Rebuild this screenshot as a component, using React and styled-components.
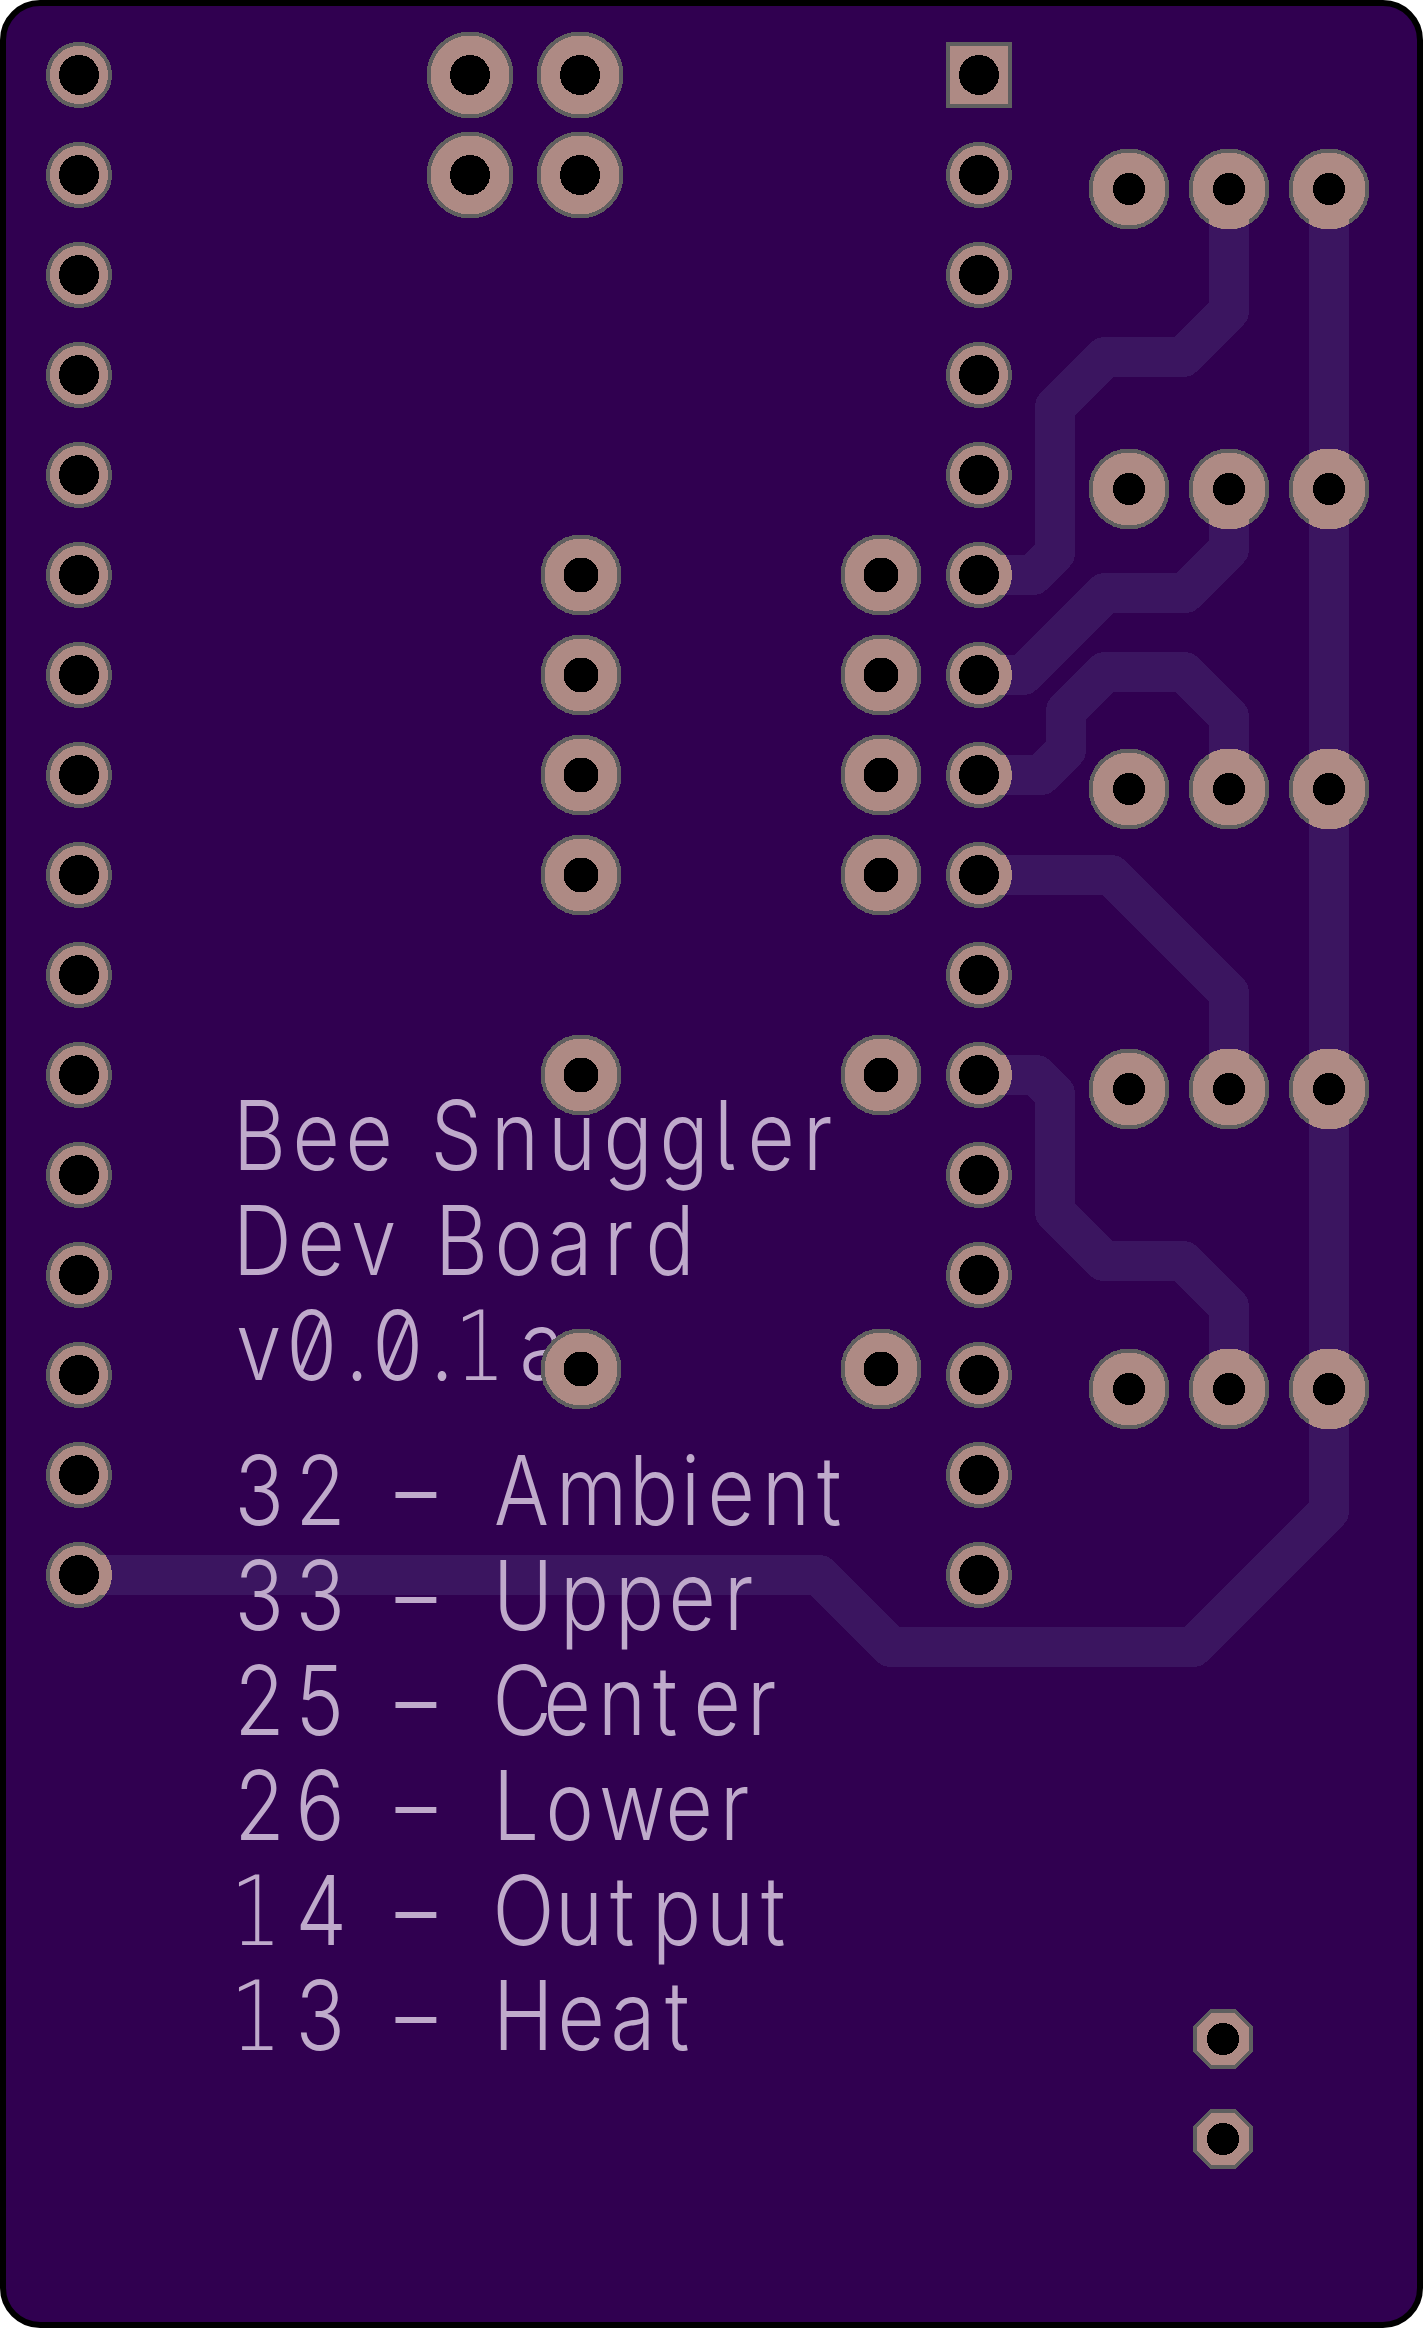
import styled, { createGlobalStyle } from 'styled-components';

const GlobalStyle = createGlobalStyle`
  html, body {
    margin: 0;
    padding: 0;
    background: #fff;
  }
`;

const Board = styled.div`
  width: 1423px;
  height: 2328px;
  box-sizing: border-box;
  border: 6px solid #000;
  border-radius: 40px;
  background: #300050;
  overflow: hidden;
`;

const Canvas = styled.svg`
  display: block;
  width: 1411px;
  height: 2316px;
`;

const Trace = styled.path`
  fill: none;
  stroke: #3b1560;
  stroke-width: 40;
  stroke-linejoin: round;
  shape-rendering: crispEdges;
`;

const Silk = styled.text`
  font-family: Inter, "Liberation Sans", sans-serif;
  font-size: 96px;
  font-weight: 300;
  font-feature-settings: "zero", "cv05";
  fill: #bfaacb;
`;

const FootedOne = styled.tspan`
  font-family: "DejaVu Sans", "Liberation Sans", sans-serif;
  font-weight: 200;
`;

const Land = styled.circle`
  fill: #ae8a84;
  stroke: #5f5f5f;
  stroke-width: 4;
  shape-rendering: crispEdges;
`;

const SquareLand = styled.rect`
  fill: #ae8a84;
  stroke: #5f5f5f;
  stroke-width: 4;
  shape-rendering: crispEdges;
`;

const OctLand = styled.polygon`
  fill: #ae8a84;
  stroke: #5f5f5f;
  stroke-width: 4;
  shape-rendering: crispEdges;
`;

const Stub = styled.path`
  fill: #ae8a84;
  shape-rendering: crispEdges;
`;

const Hole = styled.circle`
  fill: #000;
  shape-rendering: crispEdges;
`;

const TRACES = [
  'M1229 189 L1229 311 L1183 357 L1105 357 L1055 407 L1055 553 L1033 575 L979 575',
  'M1229 489 L1229 549 L1185 593 L1105 593 L1023 675 L979 675',
  'M979 775 L1041 775 L1066 750 L1066 711 L1105 672 L1184 672 L1229 717 L1229 789',
  'M979 875 L1111 875 L1229 993 L1229 1089',
  'M979 1075 L1036 1075 L1055 1094 L1055 1212 L1104 1261 L1183 1261 L1229 1307 L1229 1389',
  'M1329 189 L1329 1511 L1193 1647 L891 1647 L819 1575 L79 1575',
];

const DOWN = 0;
const RIGHT = -90;
const UP = 180;

const range = (start, step, count) => Array.from({ length: count }, (_, i) => start + step * i);

const PADS = [
  ...range(75, 100, 16).map((y) => ({ x: 79, y, r: 33, hole: 20, exits: y === 1575 ? [RIGHT] : [] })),
  ...range(175, 100, 15).map((y) => ({
    x: 979,
    y,
    r: 33,
    hole: 20,
    exits: [575, 675, 775, 875, 1075].includes(y) ? [RIGHT] : [],
  })),
  ...[470, 580].flatMap((x) => [75, 175].map((y) => ({ x, y, r: 43.5, hole: 20, exits: [] }))),
  ...[581, 881].flatMap((x) =>
    [575, 675, 775, 875, 1075, 1369].map((y) => ({ x, y, r: 40.5, hole: 17.5, exits: [] })),
  ),
  ...[189, 489, 789, 1089, 1389].map((y) => ({ x: 1129, y, r: 40.5, hole: 16, exits: [] })),
  { x: 1229, y: 189, r: 40.5, hole: 16, exits: [DOWN] },
  { x: 1229, y: 489, r: 40.5, hole: 16, exits: [DOWN] },
  { x: 1229, y: 789, r: 40.5, hole: 16, exits: [UP] },
  { x: 1229, y: 1089, r: 40.5, hole: 16, exits: [UP] },
  { x: 1229, y: 1389, r: 40.5, hole: 16, exits: [UP] },
  { x: 1329, y: 189, r: 40.5, hole: 16, exits: [DOWN] },
  ...[489, 789, 1089, 1389].map((y) => ({ x: 1329, y, r: 40.5, hole: 16, exits: [UP, DOWN] })),
];

// ink-left of each glyph, read off the board; spaces get a dummy slot
const LINES = [
  { text: 'Bee Snuggler', y: 1170, ink: [239, 297, 350, 400, 435, 497, 554, 608, 664, 720, 752, 809] },
  { text: 'Dev Board', y: 1275, ink: [239, 302, 354, 400, 441, 499, 552, 610, 650] },
  { text: 'v0.0.1a', y: 1380, ink: [239, 291, 350, 377, 435, 463, 524] },
  { text: '32 – Ambient', y: 1525, ink: [239, 300, 370, 400, 470, 495, 562, 635, 687, 712, 768, 818] },
  { text: '33 – Upper', y: 1630, ink: [239, 300, 370, 400, 470, 499, 566, 621, 673, 730] },
  { text: '25 – Center', y: 1735, ink: [239, 300, 370, 400, 470, 497, 548, 604, 654, 698, 753] },
  { text: '26 – Lower', y: 1840, ink: [239, 300, 370, 400, 470, 499, 550, 602, 670, 726] },
  { text: '14 – Output', y: 1945, ink: [239, 300, 370, 400, 470, 497, 561, 611, 658, 712, 762] },
  { text: '13 – Heat', y: 2050, ink: [239, 300, 370, 400, 470, 499, 562, 615, 666] },
];

const SQUEEZE = 0.85;
const stems = 'BDHLUbhiklmnpru';
const bearing = (ch) => {
  if (stems.includes(ch)) return 6;
  if (ch === '1') return 9;
  if (ch === 'v' || ch === 'w') return 3;
  if (ch === 'A' || ch === 't') return 1;
  return 4.5;
};

const glyphX = (text, ink) =>
  [...text].map((ch, i) => ((ink[i] - bearing(ch)) / SQUEEZE).toFixed(1)).join(' ');

// the footed "1" comes from another family, everything else stays in one run
const silkRuns = (text) =>
  text.split(/(1)/).filter(Boolean).map((run, i) =>
    run === '1' ? <FootedOne key={i}>1</FootedOne> : <tspan key={i}>{run}</tspan>,
  );

const stubPath = (r) => {
  const dy = Math.sqrt(r * r - 400).toFixed(1);
  return `M-20 0 L-20 ${dy} A${r} ${r} 0 0 0 20 ${dy} L20 0 Z`;
};

const Pad = ({ x, y, r, hole, exits }) => (
  <g>
    <Land cx={x} cy={y} r={r - 2} />
    {exits.map((angle) => (
      <Stub key={angle} d={stubPath(r)} transform={`translate(${x} ${y}) rotate(${angle})`} />
    ))}
    <Hole cx={x} cy={y} r={hole} />
  </g>
);

const octagon = (cx, cy) => {
  const a = 28;
  const b = 12;
  return [
    [-b, -a], [b, -a], [a, -b], [a, b], [b, a], [-b, a], [-a, b], [-a, -b],
  ].map(([dx, dy]) => `${cx + dx},${cy + dy}`).join(' ');
};

const App = () => (
  <>
    <GlobalStyle />
    <Board>
      <Canvas viewBox="6 6 1411 2316">
        {TRACES.map((d) => (
          <Trace key={d} d={d} />
        ))}
        <g transform={`scale(${SQUEEZE} 1)`}>
          {LINES.map((line) => (
            <Silk key={line.text} y={line.y} x={glyphX(line.text, line.ink)}>
              {silkRuns(line.text)}
            </Silk>
          ))}
        </g>
        {PADS.map((pad) => (
          <Pad key={`${pad.x}-${pad.y}`} {...pad} />
        ))}
        <SquareLand x={948} y={44} width={62} height={62} />
        <Hole cx={979} cy={75} r={20} />
        {[2039, 2139].map((y) => (
          <g key={y}>
            <OctLand points={octagon(1223, y)} />
            <Hole cx={1223} cy={y} r={16} />
          </g>
        ))}
      </Canvas>
    </Board>
  </>
);

export default App;
